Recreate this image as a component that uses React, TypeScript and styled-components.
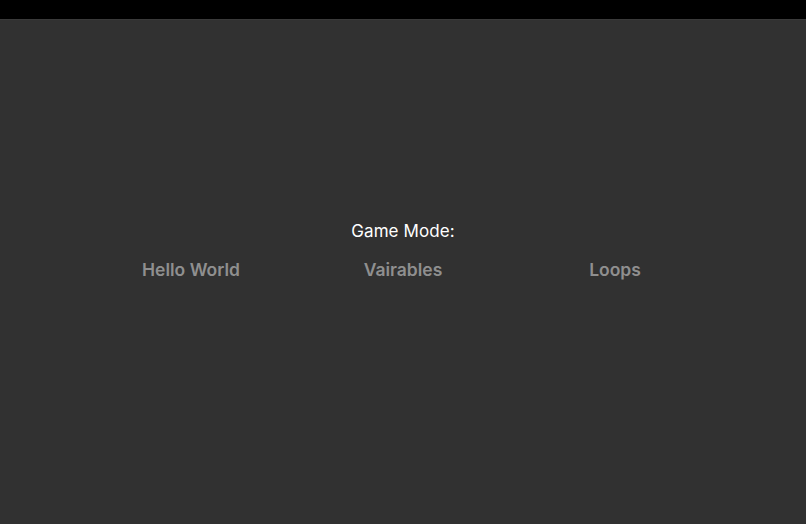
import React from "react";
import styled, { createGlobalStyle } from "styled-components";

const GlobalStyle = createGlobalStyle`
  html, body {
    margin: 0;
    padding: 0;
    background: #313131;
    font-family: Inter, "Noto Sans", "Liberation Sans", sans-serif;
  }
`;

const Page = styled.div`
  display: flex;
  flex-direction: column;
  height: 524px;
`;

const TopBar = styled.div`
  height: 19px;
  background: #000;
  border-bottom: 1px solid #3a3a3a;
`;

const Main = styled.main`
  flex: 1;
  display: flex;
  flex-direction: column;
  align-items: center;
  padding-top: 201px;
`;

const Title = styled.h2`
  margin: 0;
  font-size: 17px;
  font-weight: 400;
  color: #ffffff;
  letter-spacing: 0.1px;
`;

const Modes = styled.div`
  display: grid;
  grid-template-columns: repeat(3, 212px);
  margin-top: 18px;
`;

const ModeButton = styled.button`
  background: none;
  border: 0;
  outline: 0;
  padding: 0;
  font-family: inherit;
  font-size: 17.5px;
  font-weight: 600;
  color: #8f8f8f;
  cursor: pointer;
  text-align: center;
`;

const modes = ["Hello World", "Vairables", "Loops"];

export default function App() {
  return (
    <>
      <GlobalStyle />
      <Page>
        <TopBar />
        <Main>
          <Title>Game Mode:</Title>
          <Modes>
            {modes.map((m) => (
              <ModeButton key={m}>{m}</ModeButton>
            ))}
          </Modes>
        </Main>
      </Page>
    </>
  );
}
